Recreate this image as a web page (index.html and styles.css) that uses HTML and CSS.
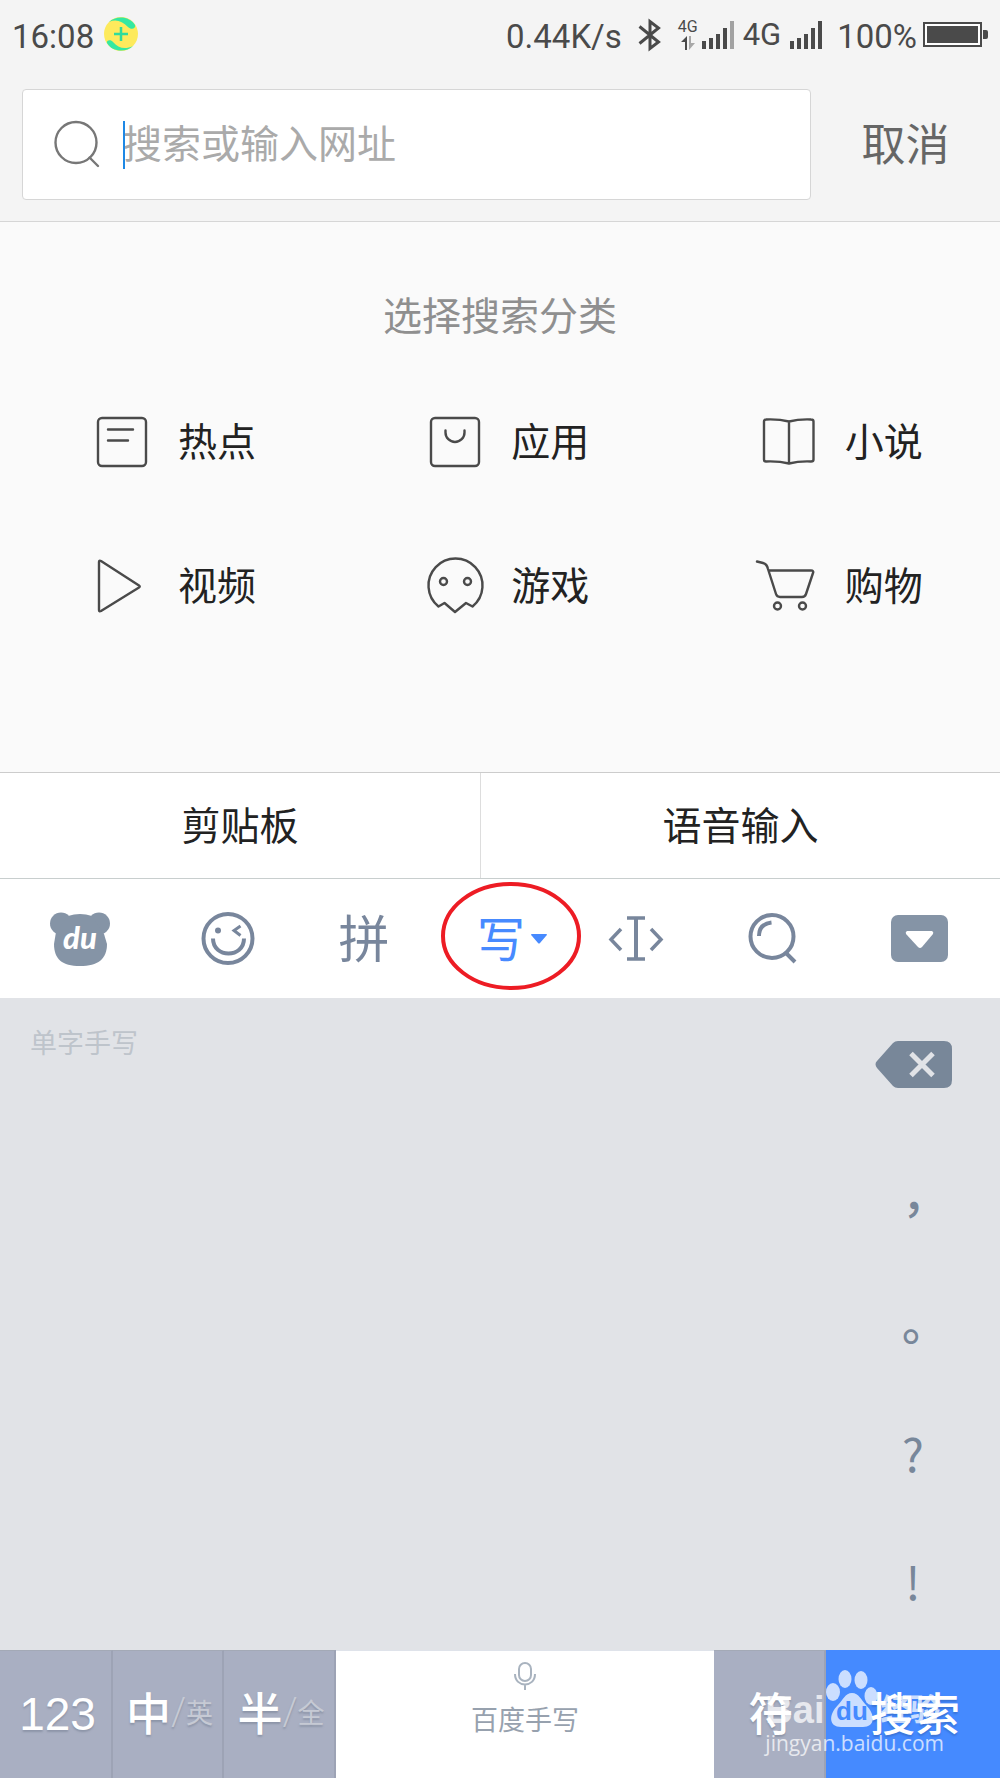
FILE: index.html
```html
<!DOCTYPE html>
<html lang="zh-CN">
<head>
<meta charset="utf-8">
<meta name="viewport" content="width=device-width, initial-scale=1">
<title>搜索</title>
<link rel="stylesheet" href="styles.css">
</head>
<body>
<header class="top">
  <div class="status">
    <div class="status-left">
      <span>16:08</span>
      <svg class="coin" width="34" height="34" viewBox="0 0 34 34" aria-hidden="true">
        <circle cx="17" cy="17" r="17" fill="#fdea5c"/>
        <path d="M5 5C12-2 26-1 31 8c1 4-4 5-7 2C18 4 12 2 5 5z" fill="#34e8a2"/>
        <path d="M29 29C22 36 8 35 3 26c-1-3 4-4 6-1 5 6 12 8 20 4z" fill="#34e8a2"/>
        <path d="M17 10v14M10 17h14" stroke="#2fdc9c" stroke-width="2.500" fill="none"/>
      </svg>
    </div>
    <div class="status-right">
      <span class="speed">0.44K/s</span>
      <svg class="bluetooth" width="24" height="32" viewBox="0 0 24 32" fill="none" stroke="#4a4a4a" stroke-width="3" aria-hidden="true"><path d="M1.500 7.500 20.500 23 12 29.500V2.500L20.500 9 1.500 24.500"/></svg>
      <div class="net">
        <span>4G</span>
        <svg width="14" height="14" viewBox="0 0 14 14" aria-hidden="true"><path d="M6 14H4V6H0L6 0z" fill="#4a4a4a"/><path d="M8 0h2v7h4l-6 7z" fill="#a8a8a8"/></svg>
      </div>
      <svg width="32" height="28" viewBox="0 0 32 28" fill="#4a4a4a" aria-hidden="true"><path d="M0 20h4v8H0zM7 17h4v11H7zM14 13h4v15h-4zM21 7h4v21h-4z"/><path d="M28 0h4v28h-4z" fill="#a2a2a2"/></svg>
      <span class="carrier">4G</span>
      <svg class="signal" width="32" height="28" viewBox="0 0 32 28" fill="#4a4a4a" aria-hidden="true"><path d="M0 20h4v8H0zM7 17h4v11H7zM14 13h4v15h-4zM21 7h4v21h-4zM28 0h4v28h-4z"/></svg>
      <span>100%</span>
      <svg class="battery" width="65" height="26" viewBox="0 0 65 26" aria-hidden="true"><path d="M1 1h57v23H1z" fill="#fff" stroke="#4a4a4a" stroke-width="2"/><path d="M4 4h51v17H4zM60 8h3q2 0 2 2v5q0 2-2 2h-3z" fill="#4a4a4a"/></svg>
    </div>
  </div>
  <form class="search">
    <label class="search-box">
      <svg width="46" height="48" viewBox="0 0 46 48" fill="none" stroke="#777" stroke-width="2.400" stroke-linecap="round" aria-label="搜索"><circle cx="23" cy="21.500" r="20.500"/><path d="M36.500 36.500 45 45"/></svg>
      <span class="caret"></span>
      <input type="text" placeholder="搜索或输入网址">
    </label>
    <button type="button" class="cancel">取消</button>
  </form>
</header>

<main class="categories">
  <h1>选择搜索分类</h1>
  <nav class="cat-grid">
    <a href="#hot"><svg viewBox="0 0 60 60"><rect x="6" y="6" width="48" height="48" rx="4"/><path d="M16 17.500h25M16 28.500h20"/></svg><span>热点</span></a>
    <a href="#apps"><svg viewBox="0 0 60 60"><rect x="6" y="6" width="48" height="48" rx="4"/><path d="M20.500 18.500v2a9.500 9.500 0 0 0 19 0v-2"/></svg><span>应用</span></a>
    <a href="#novels"><svg viewBox="0 0 60 60"><path d="M30 9.500Q20 7 7 7.500q-2 0-2 2v38q0 2 2 2 13-.5 23 2 10-2.500 22-2 2.500 0 2.500-2v-38q0-2-2.500-2-12-.5-22 2zM30 9.500v42"/></svg><span>小说</span></a>
    <a href="#video"><svg viewBox="0 0 60 60"><path d="M7 6v48q0 2 2 1L47 31.500q1.500-1 0-2L9 5q-2-1-2 1z"/></svg><span>视频</span></a>
    <a href="#games"><svg viewBox="0 0 60 60"><path d="M13.500 50.500A27 27 0 1 1 47.500 50.500L41 47 30 56 19.500 47z"/><circle cx="18.500" cy="25.500" r="3.500"/><circle cx="42.500" cy="25.500" r="3.500"/></svg><span>游戏</span></a>
    <a href="#shopping"><svg viewBox="0 0 60 60"><path d="M-2 5.500 4 7q4 1 5 6l8 25q1 3 4 3h22q3 0 4-3l7-21q1-2.500-2-2.500H10"/><circle cx="18.500" cy="50" r="3.500"/><circle cx="43.500" cy="50" r="3.500"/></svg><span>购物</span></a>
  </nav>
</main>

<section class="keyboard">
  <div class="suggestions">
    <button type="button">剪贴板</button>
    <button type="button">语音输入</button>
  </div>
  <div class="toolbar">
    <button type="button" aria-label="百度输入法">
      <svg width="60" height="54" viewBox="0 0 60 54" fill="#8594a6"><circle cx="11" cy="11.500" r="11"/><circle cx="49" cy="11.500" r="11"/><path d="M18 4Q30 0 42 4L54 22 57 32C57 47 48 54 30 54S4 47 4 32L6 20z"/><text class="bear-text" x="30" y="37" text-anchor="middle">du</text></svg>
    </button>
    <button type="button" aria-label="表情">
      <svg width="54" height="54" viewBox="0 0 54 54" fill="none" stroke="#78869c" stroke-width="4"><circle cx="27" cy="26.500" r="24.500"/><circle cx="17" cy="18.500" r="3" fill="#78869c" stroke="none"/><path d="M39.500 14 33 18.500l6.500 5" stroke-width="3"/><path d="M12 26.500c0 20 31 20 31 0"/></svg>
    </button>
    <button type="button" class="pinyin">拼</button>
    <button type="button" class="write"><span>写</span><svg width="16" height="10" viewBox="0 0 16 10"><path d="M1 0h14q2 0 0 2L9 9q-1 1-2 0L1 2Q-1 0 1 0z" fill="#478aff"/></svg>
      <svg class="ring" width="142" height="110" viewBox="0 0 142 110"><ellipse cx="71" cy="55" rx="68" ry="52" fill="none" stroke="#ed1c24" stroke-width="4"/></svg>
    </button>
    <button type="button" aria-label="移动光标">
      <svg width="56" height="46" viewBox="0 0 56 46" fill="none" stroke="#78869c" stroke-width="4"><path d="M28 2v42"/><path d="M19 2h18M19 43h18M13 13 3 23.500 13 34M43 13l10 10.500L43 34" stroke-width="3.500"/></svg>
    </button>
    <button type="button" aria-label="搜索">
      <svg width="50" height="52" viewBox="0 0 50 52" fill="none" stroke="#78869c" stroke-width="4"><circle cx="25" cy="23.500" r="21.500"/><path d="M12 23q0-12 12.500-13.500M39 40l9 9"/></svg>
    </button>
    <button type="button" aria-label="收起键盘">
      <svg width="58" height="48" viewBox="0 0 58 48"><rect x="1" width="57" height="47" rx="7" fill="#8594a6"/><path d="M17 16h25q2 1 1 3L32 32q-2 2-4 0L16 19q-1-2 1-3z" fill="#fff"/></svg>
    </button>
  </div>
  <div class="pad">
    <p>单字手写</p>
    <div class="punct">
      <button type="button" class="erase" aria-label="删除">
        <svg width="78" height="48" viewBox="0 0 78 48"><path d="M24 0h46q8 0 8 8v31q0 8-8 8H24q-3 0-5-2L3 27q-3-4 0-7L19 2q2-2 5-2z" fill="#788799"/><path d="m37 12.500 22 22M59 12.500 37 34.500" stroke="#e1e3e7" stroke-width="5"/></svg>
      </button>
      <button type="button" class="wide">，</button>
      <button type="button" class="wide">。</button>
      <button type="button">?</button>
      <button type="button">!</button>
    </div>
  </div>
  <div class="keys">
    <button type="button" class="num">123</button>
    <button type="button">中<span class="slash">/</span><small>英</small></button>
    <button type="button">半<span class="slash">/</span><small>全</small></button>
    <button type="button" class="space">
      <svg width="22" height="28" viewBox="0 0 22 28" fill="none" stroke="#a9b3bf" stroke-width="2"><rect x="5" y="1" width="12" height="18" rx="6"/><path d="M1 12c0 14 20 14 20 0M11 23v5"/></svg>
      百度手写
    </button>
    <button type="button">符</button>
    <button type="button" class="go">搜索</button>
    <div class="watermark">
      <div class="brand">
        <span>Bai</span>
        <svg width="52" height="58" viewBox="0 0 52 58" fill="#fff"><ellipse cx="7" cy="22" rx="7" ry="9"/><ellipse cx="19" cy="9" rx="6.500" ry="9"/><ellipse cx="35" cy="10" rx="6.500" ry="9"/><ellipse cx="45" cy="26" rx="6.500" ry="9"/><path d="M26 23c-7 0-9 7-14 12-10 10-9 22 3 22h22c12 0 13-12 3-22-5-5-7-12-14-12z"/><text class="paw-text" x="26" y="50" text-anchor="middle">du</text></svg>
        <span class="cn">经验</span>
      </div>
      <div class="site">jingyan.baidu.com</div>
    </div>
  </div>
</section>
</body>
</html>
```
FILE: styles.css
```css
* { box-sizing: border-box; }

body {
  margin: 0;
  min-height: 100vh;
  display: flex;
  flex-direction: column;
  background: #fafafa;
  color: #222;
  font-family: Roboto, "Noto Sans CJK SC", sans-serif;
}

svg { display: block; flex: none; overflow: visible; }

button {
  border: 0;
  padding: 0;
  background: none;
  color: inherit;
  font: inherit;
  display: flex;
  align-items: center;
  justify-content: center;
}

/* status bar and search box */
.top { background: #f4f4f4; border-bottom: 1px solid #d6d6d6; }

.status {
  display: flex;
  justify-content: space-between;
  align-items: center;
  height: 72px;
  padding: 2px 12px 0;
  color: #4a4a4a;
  font-size: 33px;
  line-height: 40px;
}
.status-left, .status-right { display: flex; align-items: center; }
.status-left { gap: 10px; }
.coin { margin-bottom: 6px; }
.bluetooth { margin: 0 16px; }
.net { display: flex; flex-direction: column; align-items: center; gap: 2px; margin-right: 4px; font-size: 16px; line-height: 14px; }
.status-right svg { margin-bottom: 4px; }
.net svg { margin-bottom: 0; }
.net { padding-bottom: 4px; }
.carrier { margin: 0 9px; padding-bottom: 5px; font-size: 31px; }
.signal { margin-right: 15px; }
.battery { margin-left: 6px; }

.search { display: flex; margin: 17px 0 21px 22px; }
.search-box {
  flex: 1;
  display: flex;
  align-items: center;
  height: 111px;
  padding: 0 30px;
  background: #fff;
  border: 1px solid #d6d6d6;
  border-radius: 4px;
}
.caret { width: 2px; height: 48px; margin-left: 24px; background: #1e88e5; }
.search-box input {
  flex: 1;
  min-width: 0;
  border: 0;
  padding: 0 0 8px;
  outline: 0;
  background: none;
  font: 39px/56px "Noto Sans CJK SC", sans-serif;
  text-indent: -2px;
}
.search-box input::placeholder { color: #aaa; opacity: 1; }
.cancel { width: 189px; padding-bottom: 6px; color: #666; font-size: 44px; }

/* search categories */
.categories { flex: 1; }
.categories h1 {
  margin: 65px 0 23px;
  text-align: center;
  color: #8f8f8f;
  font-size: 39px;
  font-weight: 400;
  line-height: 60px;
}
.cat-grid { display: grid; grid-template-columns: repeat(3, 1fr); }
.cat-grid a {
  display: flex;
  align-items: center;
  gap: 26px;
  height: 144px;
  padding-left: 92px;
  color: #222;
  font-size: 39px;
  text-decoration: none;
}
.cat-grid span { padding-bottom: 6px; }
.cat-grid svg { width: 60px; height: 60px; fill: none; stroke: #4a4a4a; stroke-width: 2.4px; stroke-linecap: round; stroke-linejoin: round; }

/* keyboard */
.suggestions {
  display: grid;
  grid-template-columns: 48fr 52fr;
  height: 107px;
  background: #fff;
  border-top: 1px solid #ccc;
  border-bottom: 1px solid #c8cece;
  font-size: 39px;
}
.suggestions button { padding-bottom: 5px; }
.suggestions button + button { border-left: 1px solid #ddd; }

.toolbar {
  display: grid;
  grid-template-columns: 160fr 136fr 136fr 156fr 96fr 176fr 118fr 22fr;
  height: 119px;
  background: #fff;
  color: #78869c;
}
.pinyin { padding: 0 0 6px; font-size: 51px; }
.write { position: relative; gap: 6px; padding-left: 4px; color: #478aff; font-size: 48px; }
.write span { padding-bottom: 6px; }
.ring { position: absolute; left: 8px; top: 2px; }
.bear-text { fill: #fff; font: italic 900 31px Lato, sans-serif; }

.pad {
  display: flex;
  justify-content: space-between;
  height: 652px;
  background: #e1e3e7;
  color: #78879a;
}
.pad p { margin: 26px 30px; color: #bec4cb; font-size: 27px; line-height: 40px; }
.punct {
  display: grid;
  grid-auto-rows: 128px;
  align-content: start;
  width: 174px;
  padding-top: 3px;
  font: 46px/60px "Noto Sans CJK SC", sans-serif;
}
.punct button { padding-top: 5px; }
.punct .erase { padding-top: 0; }
.punct .wide { font-weight: 500; padding: 0 0 2px 24px; }

.keys {
  position: relative;
  display: grid;
  grid-template-columns: 113fr 111fr 112fr 378fr 112fr 174fr;
  height: 128px;
  color: #fff;
  font-size: 45px;
}
.keys button {
  padding: 0 0 6px 4px;
  background: #a9afc2;
  border-top: 1px solid #a3a9b6;
  border-right: 2px solid #9da3b5;
  font-weight: 500;
  text-shadow: 0 2px 2px #8d95a8;
}
.keys .num { padding-bottom: 2px; font: 46px "Liberation Sans", sans-serif; }
.slash { color: #c6cad4; font-weight: 300; font-size: 38px; }
.keys small { color: #c6cad4; font-weight: 400; font-size: 27px; }
.keys .space {
  flex-direction: column;
  justify-content: flex-start;
  gap: 11px;
  padding: 11px 0 0;
  background: #fff;
  border-color: #dfe3ea;
  border-right: 0;
  color: #97a1ae;
  font-size: 27px;
  font-weight: 400;
  line-height: 40px;
  text-shadow: none;
}
.keys .go { background: #458aff; border: 0; text-shadow: 0 2px 2px #3a74d8; }

.watermark {
  position: absolute;
  right: 56px;
  bottom: 20px;
  pointer-events: none;
  opacity: 0.72;
}
.brand { display: flex; align-items: flex-end; gap: 2px; font: 900 38px/36px "Liberation Sans", "Noto Sans CJK SC", sans-serif; height: 58px; }
.brand .cn { font-size: 30px; }
.paw-text { fill: #458aff; font: 700 26px "Liberation Sans", sans-serif; }
.site { font: 21px/30px "Open Sans", sans-serif; text-align: right; }
```
